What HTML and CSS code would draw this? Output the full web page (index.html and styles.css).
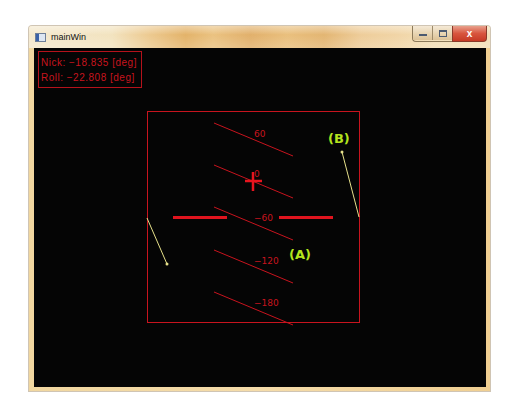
FILE: index.html
```html
<!DOCTYPE html>
<html>
<head>
<meta charset="utf-8">
<link rel="stylesheet" href="styles.css">
</head>
<body>
<div class="window">
  <div class="titlebar">
    <div class="title">
      <span class="appicon"><span class="appicon-in"></span></span>
      <span class="title-text">mainWin</span>
    </div>
    <div class="controls">
      <div class="btn-group">
        <span class="btn btn-min"><span class="min-glyph"></span></span>
        <span class="btn btn-max"><span class="max-glyph"></span></span>
      </div>
      <span class="btn btn-close">x</span>
    </div>
  </div>
  <div class="content">
    <svg class="canvas" width="452" height="339" viewBox="34 48 452 339" xmlns="http://www.w3.org/2000/svg">
      <rect x="34" y="48" width="452" height="339" fill="#050505"/>
      <rect x="38.5" y="51.5" width="103" height="36" fill="none" stroke="#b5121b" stroke-width="1"/>
      <text x="41" y="66" class="info">Nick: −18.835 [deg]</text>
      <text x="41" y="81" class="info">Roll: −22.808 [deg]</text>

      <rect x="147.5" y="111.5" width="212" height="211" fill="none" stroke="#c8141e" stroke-width="1"/>

      <g stroke="#c8141e" stroke-width="1">
        <line x1="214" y1="123" x2="293" y2="156"/>
        <line x1="214" y1="165" x2="293" y2="198"/>
        <line x1="214" y1="207" x2="293" y2="240"/>
        <line x1="214" y1="250" x2="293" y2="283"/>
        <line x1="214" y1="292" x2="293" y2="325"/>
      </g>
      <g class="scale">
        <text x="254" y="137">60</text>
        <text x="254" y="177">0</text>
        <text x="254" y="221">−60</text>
        <text x="254" y="264">−120</text>
        <text x="254" y="306">−180</text>
      </g>

      <g stroke="#e0141e" stroke-width="3">
        <line x1="173" y1="217.5" x2="227" y2="217.5"/>
        <line x1="279" y1="217.5" x2="333" y2="217.5"/>
      </g>
      <g stroke="#e8141e" stroke-width="2.5">
        <line x1="245" y1="181" x2="262" y2="181"/>
        <line x1="253" y1="172" x2="253" y2="191"/>
      </g>

      <g stroke="#e6e08a" stroke-width="1">
        <line x1="342" y1="152" x2="359" y2="217"/>
        <line x1="147" y1="218" x2="167" y2="264"/>
      </g>
      <circle cx="342" cy="152" r="1.5" fill="#e6e08a"/>
      <circle cx="167" cy="264" r="1.5" fill="#e6e08a"/>
      <text x="328" y="143" class="tag">(B)</text>
      <text x="289" y="259" class="tag">(A)</text>
    </svg>
  </div>
</div>
</body>
</html>
```
FILE: styles.css
```css
html, body {
  margin: 0;
  padding: 0;
  background: #ffffff;
}
body {
  width: 515px;
  height: 406px;
  overflow: hidden;
  font-family: "Liberation Sans", Arial, sans-serif;
}
.window {
  margin: 26px 0 0 29px;
  width: 461px;
  height: 365px;
  display: flex;
  flex-direction: column;
  background: linear-gradient(90deg, #f1d7a0 0%, #f5dcaa 50%, #f0cf92 100%);
  border-radius: 3px 3px 0 0;
  box-shadow: 0 0 0 1px rgba(120, 90, 40, 0.35);
}
.titlebar {
  height: 22px;
  display: flex;
  align-items: flex-start;
  justify-content: space-between;
  background:
    linear-gradient(180deg, rgba(255,255,255,0.45) 0%, rgba(255,255,255,0.1) 40%, rgba(255,255,255,0.25) 100%),
    linear-gradient(90deg, #f3e6c8 0%, #f1e0b8 18%, #ebc484 26%, #e0aa58 34%, #e8bb72 40%, #dea75a 48%, #e7b86e 56%, #e0ad62 64%, #ecc78e 72%, #efd09c 80%, #f2dcb0 88%, #f2dcb0 100%);
  border-radius: 3px 3px 0 0;
}
.title {
  display: flex;
  align-items: center;
  gap: 5px;
  padding: 6px 0 0 6px;
}
.appicon {
  width: 9px;
  height: 7px;
  border: 1px solid #6e7f99;
  background: #dde6f2;
  display: flex;
}
.appicon-in {
  width: 3px;
  height: 7px;
  background: #3b62a8;
}
.title-text {
  font-family: "Liberation Sans", Arial, sans-serif;
  font-size: 9px;
  color: #111;
  line-height: 10px;
}
.controls {
  display: flex;
  margin-right: 3px;
}
.btn-group {
  display: flex;
  border: 1px solid #8c7a5a;
  border-top: none;
  border-right: none;
  border-radius: 0 0 0 4px;
  overflow: hidden;
}
.btn {
  height: 14px;
  display: flex;
  align-items: center;
  justify-content: center;
}
.btn-min, .btn-max {
  width: 19px;
  background: linear-gradient(180deg, #f4e9d6 0%, #e9d6b4 50%, #dcc297 100%);
}
.btn-min {
  border-right: 1px solid #9c8a6a;
}
.min-glyph {
  width: 8px;
  height: 2px;
  margin-top: 4px;
  background: #4c5a70;
}
.max-glyph {
  width: 6px;
  height: 4px;
  border: 1px solid #4c5a70;
  border-top-width: 2px;
}
.btn-close {
  width: 33px;
  height: 15px;
  background: linear-gradient(180deg, #e8a08c 0%, #d8553e 50%, #c63a25 100%);
  border: 1px solid #8a3a2a;
  border-top: none;
  border-radius: 0 0 4px 0;
  color: #ffffff;
  font-size: 10px;
  font-weight: bold;
  line-height: 12px;
}
.content {
  margin: 0 4px 4px 5px;
  flex: 1;
  display: flex;
  background: #050505;
}
.canvas {
  display: block;
}
.info {
  font-family: "Liberation Sans", Arial, sans-serif;
  font-size: 10px;
  letter-spacing: 0.5px;
  fill: #c8141e;
}
.scale text {
  font-family: "DejaVu Sans", sans-serif;
  font-size: 9px;
  fill: #c8141e;
}
.tag {
  font-family: "DejaVu Sans", sans-serif;
  font-size: 13px;
  font-weight: bold;
  fill: #b4e41e;
}
```
